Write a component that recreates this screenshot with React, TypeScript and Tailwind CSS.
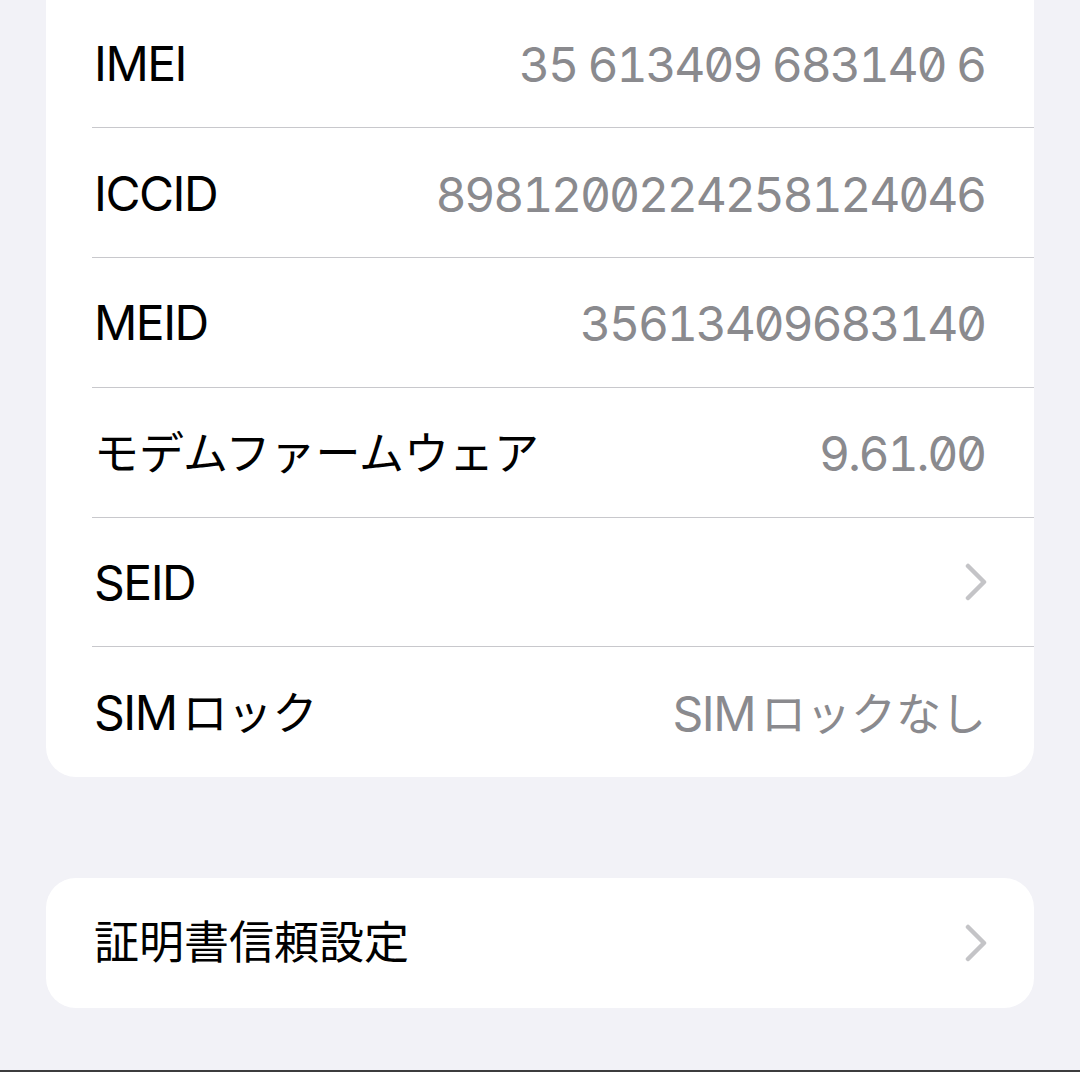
import type { ReactNode } from "react";

type Row = { label: ReactNode; value?: ReactNode; mono?: boolean; chevron?: boolean };

// katakana/kanji run slightly smaller than the latin text, like iOS does
function Jp({ children, gap }: { children: ReactNode; gap?: boolean }) {
  return (
    <span className={"text-[45px] tracking-normal " + (gap ? "ml-[6px]" : "")}>{children}</span>
  );
}

function Chevron() {
  return (
    <svg width="24" height="38" viewBox="0 0 24 38" fill="none" className="shrink-0">
      <path
        d="M4 3 L20 19 L4 35"
        stroke="#c4c4c7"
        strokeWidth="4.5"
        strokeLinecap="round"
        strokeLinejoin="round"
      />
    </svg>
  );
}

const rows: Row[] = [
  { label: "IMEI", value: "35 613409 683140 6", mono: true },
  { label: "ICCID", value: "8981200224258124046", mono: true },
  { label: "MEID", value: "35613409683140", mono: true },
  { label: <Jp>モデムファームウェア</Jp>, value: "9.61.00", mono: true },
  { label: "SEID", chevron: true },
  {
    label: (
      <>
        SIM<Jp gap>ロック</Jp>
      </>
    ),
    value: (
      <>
        SIM<Jp gap>ロックなし</Jp>
      </>
    ),
  },
];

function InfoRow({ row, last }: { row: Row; last: boolean }) {
  return (
    <div className="h-[129.75px] pl-[46px] flex">
      <div
        className={
          "flex-1 flex items-center justify-between pr-[48px] pl-[2px] " +
          (last ? "" : "border-b border-[#c8c8cc]")
        }
      >
        <div className="text-[48px] text-black whitespace-nowrap tracking-[-1.5px] pt-[2px]">
          {row.label}
        </div>
        {row.value && (
          <div
            className={
              "text-[48px] text-[#8a8a8e] whitespace-nowrap pt-[4px] " +
              (row.mono
                ? "tabular-nums slashed-zero tracking-[-2.2px] mr-[1px]"
                : "tracking-[-1.5px]")
            }
          >
            {row.value}
          </div>
        )}
        {row.chevron && (
          <div className="-mr-[2px]">
            <Chevron />
          </div>
        )}
      </div>
    </div>
  );
}

export default function App() {
  return (
    <div
      className="h-[1072px] w-[1080px] overflow-hidden bg-[#f2f2f7] flex flex-col"
      style={{ fontFamily: '"Inter", "Noto Sans CJK JP", sans-serif' }}
    >
      <div className="mx-[46px] mt-[-1.5px] bg-white rounded-b-[30px] flex flex-col">
        {rows.map((r, i) => (
          <InfoRow key={i} row={r} last={i === rows.length - 1} />
        ))}
      </div>

      <div className="mx-[46px] mt-[101px] h-[130px] bg-white rounded-[30px] flex items-center justify-between pl-[48px] pr-[46px]">
        <div className="text-black whitespace-nowrap">
          <Jp>証明書信頼設定</Jp>
        </div>
        <Chevron />
      </div>

      <div className="flex-1" />
      <div className="h-[2px] bg-[#3c3c3e]" />
    </div>
  );
}
